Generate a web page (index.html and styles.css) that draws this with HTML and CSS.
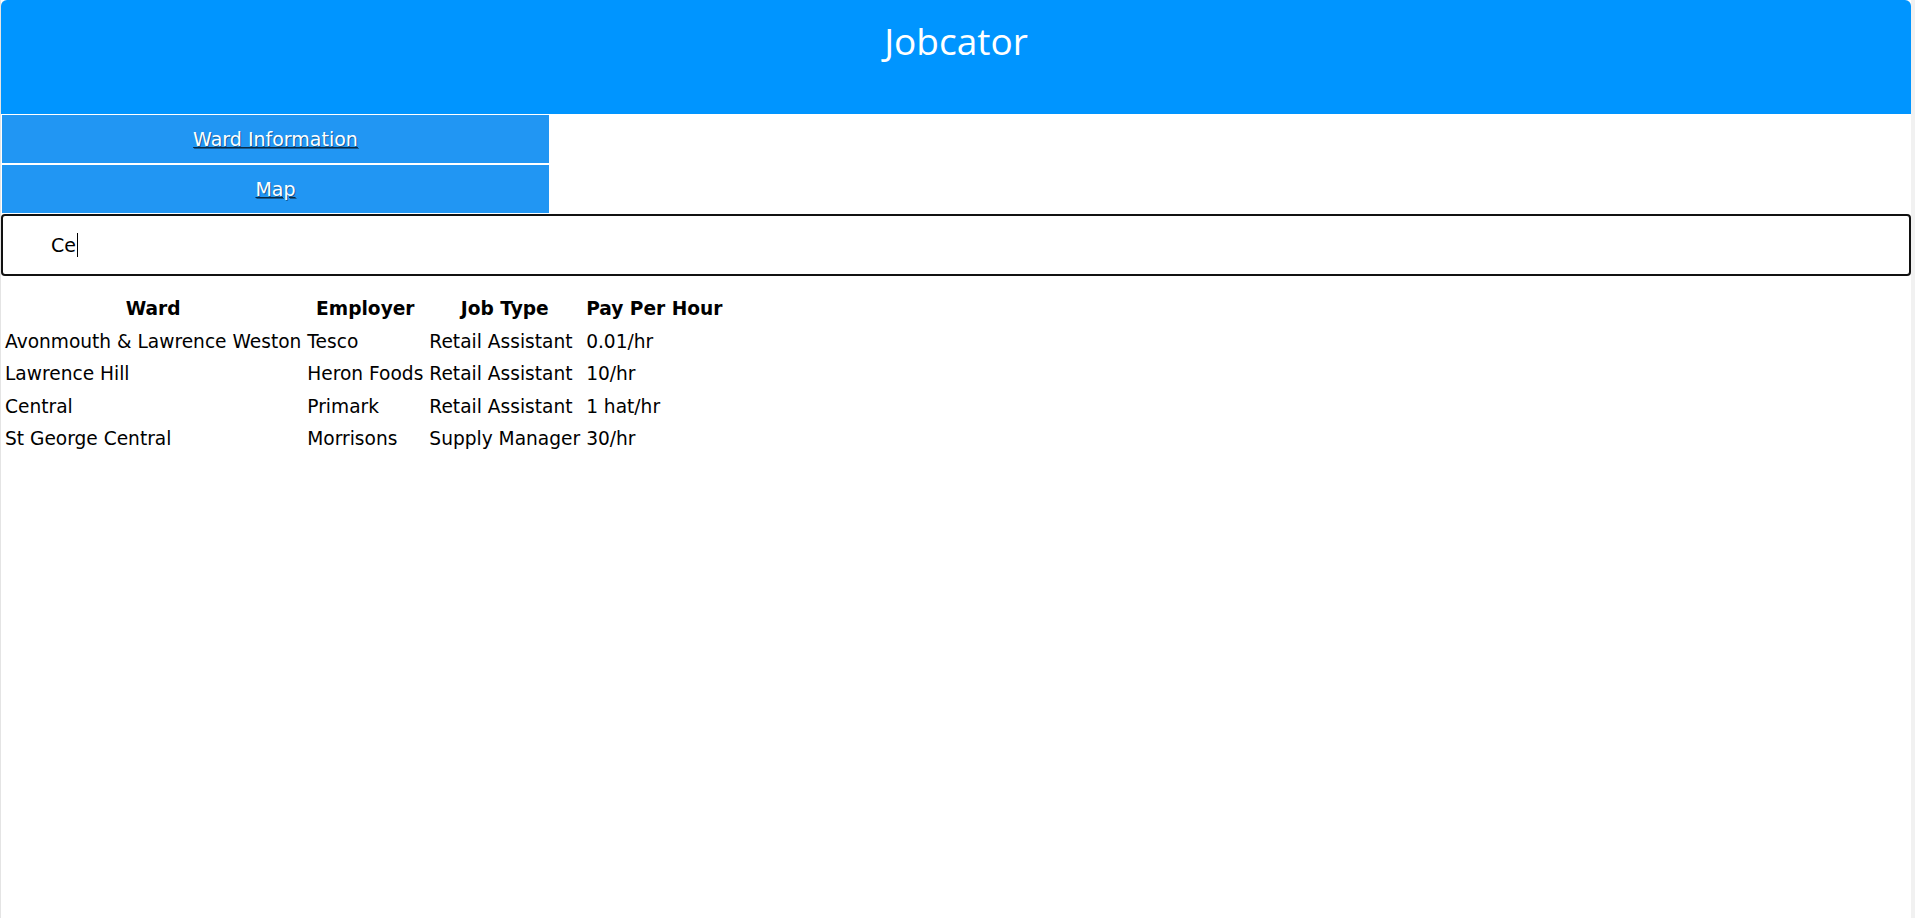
FILE: index.html
```html
<!DOCTYPE html>
<html lang="en">
<head>
<meta charset="utf-8">
<title>Jobcator</title>
<link rel="stylesheet" href="styles.css">
</head>
<body>
<div class="page">
  <div class="app">
    <header class="header">
      <h1 class="title">Jobcator</h1>
    </header>
    <nav class="nav">
      <a class="nav-btn" href="#">Ward Information</a>
      <a class="nav-btn" href="#">Map</a>
    </nav>
    <label class="search-wrap">
      <input class="search" type="text" value="Ce">
      <span class="caret"></span>
    </label>
    <table class="jobs">
      <thead>
        <tr><th>Ward</th><th>Employer</th><th>Job Type</th><th>Pay Per Hour</th></tr>
      </thead>
      <tbody>
        <tr><td>Avonmouth &amp; Lawrence Weston</td><td>Tesco</td><td>Retail Assistant</td><td>0.01/hr</td></tr>
        <tr><td>Lawrence Hill</td><td>Heron Foods</td><td>Retail Assistant</td><td>10/hr</td></tr>
        <tr><td>Central</td><td>Primark</td><td>Retail Assistant</td><td>1 hat/hr</td></tr>
        <tr><td>St George Central</td><td>Morrisons</td><td>Supply Manager</td><td>30/hr</td></tr>
      </tbody>
    </table>
  </div>
  <div class="edge"></div>
</div>
</body>
</html>
```
FILE: styles.css
```css
html, body {
  margin: 0;
  padding: 0;
  height: 100%;
  background: #ffffff;
}

body {
  font-family: "DejaVu Sans", Verdana, sans-serif;
  font-size: 18.6px;
  color: #000;
}

.page {
  display: flex;
  min-height: 100%;
}

.app {
  flex: 1;
  border-left: 1px solid #e4e4e4;
  background: #fff;
  display: flex;
  flex-direction: column;
  align-items: flex-start;
}

.edge {
  width: 4px;
  background: #f1f1f1;
}

.header {
  align-self: stretch;
  height: 114px;
  box-sizing: border-box;
  padding-top: 15px;
  background: #0095ff;
  border-radius: 6px 6px 0 0;
  text-align: center;
}

.title {
  margin: 0;
  font-family: "Open Sans", "Noto Sans", sans-serif;
  font-weight: 400;
  font-size: 37px;
  line-height: normal;
  color: #fff;
}

.nav {
  display: flex;
  flex-direction: column;
  gap: 2px;
  margin: 1px 0 0 1px;
  width: 547px;
}

.nav-btn {
  height: 48px;
  display: flex;
  align-items: center;
  justify-content: center;
  background: #2196f3;
  color: #fff;
  text-decoration: underline;
  text-decoration-color: #0a2a44;
  text-shadow: 1px 1px 0 rgba(0, 0, 0, 0.4);
  font-size: 19px;
}

.search-wrap {
  align-self: stretch;
  position: relative;
  display: flex;
  margin-top: 1px;
}

.search {
  flex: 1;
  margin: 0;
  height: 62px;
  box-sizing: border-box;
  border: 2px solid #111;
  border-radius: 4px;
  padding: 0 0 0 48px;
  font-family: "DejaVu Sans", Verdana, sans-serif;
  font-size: 19px;
  color: #000;
  background: #fff;
  outline: none;
  caret-color: transparent;
}

.caret {
  position: absolute;
  left: 76px;
  top: 19px;
  width: 1px;
  height: 24px;
  background: #000;
}

.jobs {
  margin-top: 16px;
  border-collapse: separate;
  border-spacing: 2px;
}

.jobs th,
.jobs td {
  padding: 0 2px;
  line-height: 30.6px;
  white-space: nowrap;
}

.jobs th {
  font-weight: 700;
  text-align: center;
}

.jobs td {
  text-align: left;
}
```
